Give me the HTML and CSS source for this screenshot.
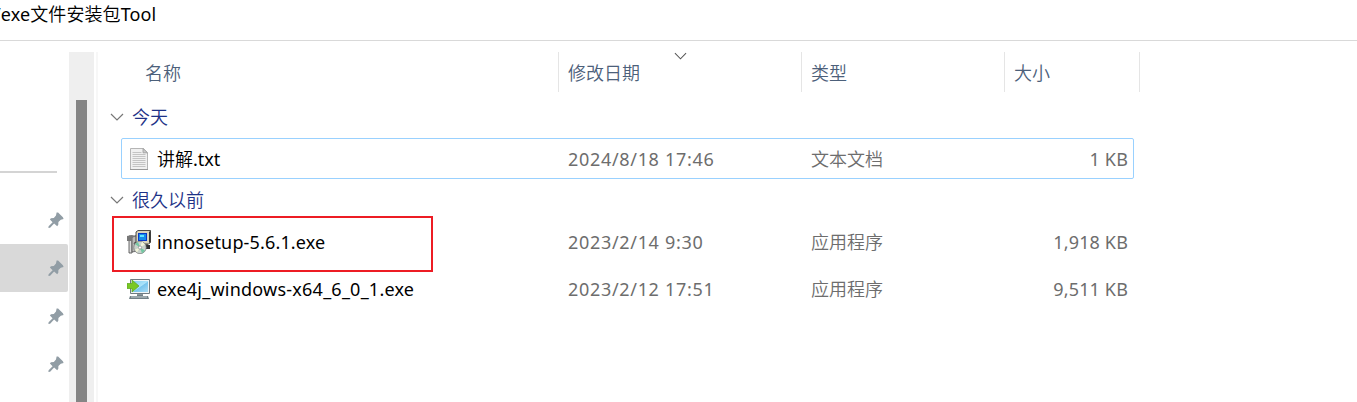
FILE: index.html
```html
<!DOCTYPE html>
<html lang="zh-CN">
<head>
<meta charset="utf-8">
<title>Tool</title>
<link rel="stylesheet" href="styles.css">
</head>
<body>
<svg class="defs" width="0" height="0" aria-hidden="true">
  <symbol id="pin" viewBox="0 0 16 16"><path d="M8.600.5h1.500l4.800 4.700.7 1.800-2.800.8-2.400 2.300-.1 2.700-1.100 1.500-3.100-2.700-4 4.100-1.700.2.200-1.700 4-4-2.700-2.600 1-1.300 2.900-.3 2.200-2.600z"/></symbol>
  <symbol id="chevron" viewBox="0 0 14 8"><path d="M1 1l6 6 6-6"/></symbol>
</svg>
<header class="titlebar"><span class="path">/exe文件安装包Tool</span></header>
<div class="explorer">
  <nav class="sidebar">
    <div class="divider"></div>
    <div class="pinned"><svg class="pin"><use href="#pin"/></svg></div>
    <div class="pinned active"><svg class="pin"><use href="#pin"/></svg></div>
    <div class="pinned"><svg class="pin"><use href="#pin"/></svg></div>
    <div class="pinned"><svg class="pin"><use href="#pin"/></svg></div>
  </nav>
  <div class="scrollbar"><div class="thumb"></div></div>
  <div class="splitter"></div>
  <main class="files">
    <div class="columns">
      <div class="column name">名称</div>
      <div class="column">修改日期<svg class="sort"><use href="#chevron"/></svg></div>
      <div class="column">类型</div>
      <div class="column">大小</div>
    </div>
    <div class="group"><svg class="chevron"><use href="#chevron"/></svg>今天</div>
    <div class="row selected">
      <div class="filename">
        <svg class="icon" viewBox="0 0 24 24">
          <path d="M3.500 1.500h12.800l4.200 4.200v16.800h-17z" fill="#f0f0f0" stroke="#b5b5b5"/>
          <path d="M3 22.500h18" stroke="#999"/>
          <path d="M16 1.500v4.300h4.500z" fill="#ccc" stroke="#999" stroke-width=".8"/>
          <path d="M5.500 5.500h9M5.500 7.500h13M5.500 9.500h13M5.500 11.500h13M5.500 13.500h13M5.500 15.500h13M5.500 17.500h13M5.500 19.500h13" stroke="#c4c4c4"/>
        </svg>
        <span class="label">讲解.txt</span>
      </div>
      <div class="cell date">2024/8/18 17:46</div><div class="cell">文本文档</div><div class="cell size">1 KB</div>
    </div>
    <div class="group old"><svg class="chevron"><use href="#chevron"/></svg>很久以前</div>
    <div class="row setup">
      <div class="filename">
        <svg class="icon" viewBox="0 0 24 24">
          <path d="M2 6h3v17H2z" fill="#ddd" stroke="#444" stroke-width=".8"/>
          <path d="M5 7l6-2v16l-6 1z" fill="#b8b8b8" stroke="#444" stroke-width=".7"/>
          <path d="M0 6l5-1 4 1-4 2v3H0z" fill="#777"/>
          <path d="M7 13l5-2h10l-2 4H8z" fill="#d5d5d5" stroke="#333" stroke-width=".8"/>
          <path d="M9 2l2-1.500h12.500v12L21.500 14H9z" fill="#d8d4bc" stroke="#222" stroke-width=".8"/>
          <path d="M22 1.500h1.500V12L22 13z" fill="#333"/>
          <path d="M11 3h9v8h-9z" fill="#0738c9"/><path d="M12 4h7v6h-7z" fill="#138bea"/><path d="M13 5h4v2h-4z" fill="#5fe5ff"/>
          <path d="M19 15h4v4h-4z" fill="#333"/>
          <circle cx="13" cy="17.500" r="6.200" fill="#c9d2cc" stroke="#777" stroke-width=".7"/>
          <path d="M13 17.500L8 14l3-2zM13 17.500l5 3-3 3z" fill="#72c7a2"/>
          <path d="M13 17.500l2-6 3 3zM13 17.500l-3 5-2-3z" fill="#f2f4d8"/>
          <circle cx="13" cy="17.500" r="1.600" fill="#fff" stroke="#777" stroke-width=".6"/>
        </svg>
        <span class="label inno">innosetup-5.6.1.exe</span>
      </div>
      <div class="cell date">2023/2/14 9:30</div><div class="cell">应用程序</div><div class="cell size">1,918 KB</div>
      <div class="highlight"></div>
    </div>
    <div class="row">
      <div class="filename">
        <svg class="icon" viewBox="0 0 24 24">
          <defs><linearGradient id="screen" x2="1" y2="1"><stop stop-color="#82cdf0"/><stop offset=".5" stop-color="#abe3fa"/><stop offset=".55" stop-color="#78c5ee"/><stop offset="1" stop-color="#a9dcf5"/></linearGradient></defs>
          <path d="M3.500 2.500h19v14h-19z" fill="#eef4f6" stroke="#6f7c83"/>
          <path d="M5 4h16v11H5z" fill="url(#screen)"/>
          <path d="M10 17h6v3h-6z" fill="#8b989e"/>
          <path d="M3 19h7v-1h6v1h5l1 3H2z" fill="#718087"/><path d="M4 20h16" stroke="#c7d0d3"/>
          <path d="M0 6.500h5V3l7 6-7 6v-3.500H0z" fill="#7ac823" stroke="#58a51e" stroke-width=".7"/>
        </svg>
        <span class="label exe4j">exe4j_windows-x64_6_0_1.exe</span>
      </div>
      <div class="cell date">2023/2/12 17:51</div><div class="cell">应用程序</div><div class="cell size">9,511 KB</div>
    </div>
  </main>
</div>
</body>
</html>
```

FILE: styles.css
```css
* { box-sizing: border-box; }
body {
  margin: 0;
  height: 402px;
  overflow: hidden;
  background: #fff;
  color: #000;
  font: 18px/24px "Noto Sans", "Noto Sans CJK SC DemiLight", "Noto Sans CJK SC", sans-serif;
  white-space: nowrap;
}
.defs { position: absolute; }
.titlebar { height: 41px; padding-top: 2px; border-bottom: 1px solid #d9d9d9; }
.path { display: block; margin-left: -6px; letter-spacing: .1px; }
.explorer { display: flex; height: 361px; padding-top: 11px; }
.sidebar { width: 69px; padding-top: 119px; }
.divider { width: 57px; height: 2px; margin-bottom: 23px; background: #d4d4d4; }
.pinned { display: flex; align-items: center; justify-content: flex-end; width: 68px; height: 48px; padding-right: 4px; border-radius: 0 2px 2px 0; }
.active { background: #d9d9d9; }
.pin { width: 16px; height: 16px; fill: #919da5; }
.scrollbar { width: 25px; padding: 48px 7px 0; background: #efefef; }
.thumb { width: 11px; height: 302px; background: #858585; }
.splitter { width: 2px; margin-left: 2px; background: #f7f7f7; }
.files { width: 1042px; }
.columns { display: grid; grid-template-columns: 461px 243px 203px 135px; height: 40px; color: #4c607a; }
.column { display: flex; align-items: center; position: relative; padding: 1px 0 0 9px; border-right: 1px solid #e5e5e5; }
.column.name { padding-left: 47px; }
.sort { position: absolute; left: 115px; top: 0; width: 13px; height: 8px; fill: none; stroke: #555; stroke-width: 1.1; }
.group { display: flex; align-items: center; height: 46px; padding: 4px 0 0 12px; color: #1e3287; }
.group.old { height: 41px; padding-top: 1px; }
.chevron { width: 14px; height: 8px; margin-right: 8px; fill: none; stroke: #777; stroke-width: 1.2; }
.row { display: grid; grid-template-columns: 438px 243px 196px 130px; align-items: center; position: relative; width: 1013px; height: 47px; margin-left: 23px; color: #6d6d6d; }
.selected { height: 41px; outline: 1px solid #99d1ff; outline-offset: -1px; border-radius: 2px; }
.setup { height: 44px; margin-bottom: 1px; }
.filename { display: flex; align-items: center; padding-left: 6px; color: #000; }
.icon { flex: none; width: 24px; height: 24px; margin-right: 6px; fill: none; }
.inno { letter-spacing: .15px; }
.exe4j { letter-spacing: .23px; }
.cell { padding-left: 9px; }
.date { letter-spacing: .68px; }
.size { padding: 0; text-align: right; letter-spacing: .15px; }
.highlight { position: absolute; left: -9px; top: -4px; width: 321px; height: 56px; border: 2px solid #ed1c24; }
```
